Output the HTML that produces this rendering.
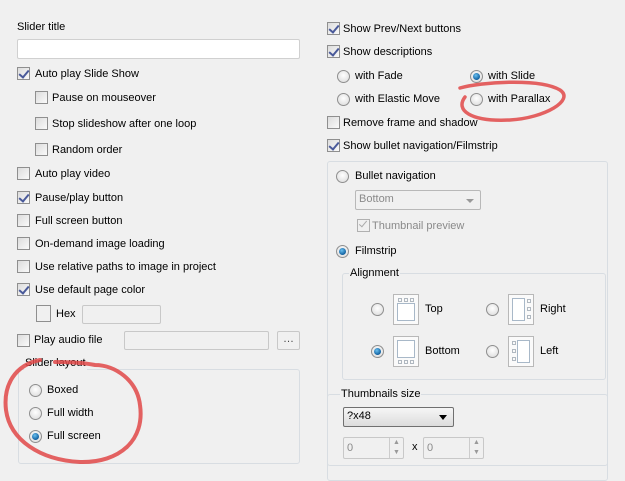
<!DOCTYPE html>
<html><head><meta charset="utf-8"><style>
*{box-sizing:border-box}
body{margin:0;width:625px;height:470px;background:#f0f0f0;font-family:"Liberation Sans",sans-serif;font-size:11px;color:#000;position:relative;overflow:hidden}
.a{position:absolute;white-space:nowrap;line-height:14px}
.cb{position:absolute;width:13px;height:13px;border:1px solid #8f8f8f;background:linear-gradient(135deg,#dcdcdc,#fafafa)}
.cb.on::after{content:"";position:absolute;left:3px;top:0px;width:4px;height:8px;border:solid #4a5a9a;border-width:0 2px 2px 0;transform:rotate(40deg)}
.rd{position:absolute;width:13px;height:13px;border-radius:50%;border:1px solid #8f8f8f;background:radial-gradient(circle at 50% 40%,#fff,#d8d8d8)}
.rd.on::after{content:"";position:absolute;left:2px;top:2px;width:7px;height:7px;border-radius:50%;background:radial-gradient(circle at 40% 35%,#6ac0f0,#1060a0 70%,#0a3050)}
.in{position:absolute;background:#fff;border:1px solid #c8c8c8;border-radius:2px}
.g{position:absolute;border:1px solid #d8dde2;border-radius:3px}
.lg{position:absolute;background:#f0f0f0;padding:0 1px;line-height:14px}
.dis{color:#8a8a8a}
</style></head><body>
<div class="a" style="left:17px;top:20px">Slider title</div>
<div class="in" style="left:17px;top:39px;width:283px;height:20px;border-color:#d0d0d0"></div>
<div class="cb on" style="left:17px;top:67px"></div><div class="a" style="left:35px;top:67px">Auto play Slide Show</div>
<div class="cb" style="left:35px;top:91px"></div><div class="a" style="left:52px;top:91px">Pause on mouseover</div>
<div class="cb" style="left:35px;top:117px"></div><div class="a" style="left:52px;top:117px">Stop slideshow after one loop</div>
<div class="cb" style="left:35px;top:143px"></div><div class="a" style="left:52px;top:143px">Random order</div>
<div class="cb" style="left:17px;top:167px"></div><div class="a" style="left:35px;top:167px">Auto play video</div>
<div class="cb on" style="left:17px;top:191px"></div><div class="a" style="left:35px;top:191px">Pause/play button</div>
<div class="cb" style="left:17px;top:214px"></div><div class="a" style="left:35px;top:214px">Full screen button</div>
<div class="cb" style="left:17px;top:237px"></div><div class="a" style="left:35px;top:237px">On-demand image loading</div>
<div class="cb" style="left:17px;top:260px"></div><div class="a" style="left:35px;top:260px">Use relative paths to image in project</div>
<div class="cb on" style="left:17px;top:283px"></div><div class="a" style="left:35px;top:283px">Use default page color</div>
<div style="position:absolute;left:36px;top:305px;width:15px;height:17px;border:1px solid #8f8f8f;background:#f0f0f0"></div>
<div class="a" style="left:56px;top:307px">Hex</div>
<div class="in" style="left:82px;top:305px;width:79px;height:19px;background:#f0f0f0"></div>
<div class="cb" style="left:17px;top:334px"></div><div class="a" style="left:34px;top:333px">Play audio file</div>
<div class="in" style="left:124px;top:331px;width:145px;height:19px;background:#f0f0f0"></div>
<div class="in" style="left:277px;top:331px;width:23px;height:19px;background:#f0f0f0;text-align:center;line-height:14px;color:#444">…</div>
<div class="g" style="left:18px;top:369px;width:282px;height:95px"></div>
<div class="lg" style="left:24px;top:356px">Slider layout</div>
<div class="rd" style="left:29px;top:384px"></div><div class="a" style="left:47px;top:383px">Boxed</div>
<div class="rd" style="left:29px;top:407px"></div><div class="a" style="left:47px;top:406px">Full width</div>
<div class="rd on" style="left:29px;top:430px"></div><div class="a" style="left:47px;top:429px">Full screen</div>

<div class="cb on" style="left:327px;top:22px"></div><div class="a" style="left:343px;top:22px">Show Prev/Next buttons</div>
<div class="cb on" style="left:327px;top:45px"></div><div class="a" style="left:343px;top:45px">Show descriptions</div>
<div class="rd" style="left:337px;top:70px"></div><div class="a" style="left:355px;top:69px">with Fade</div>
<div class="rd on" style="left:470px;top:70px"></div><div class="a" style="left:488px;top:69px">with Slide</div>
<div class="rd" style="left:337px;top:93px"></div><div class="a" style="left:355px;top:92px">with Elastic Move</div>
<div class="rd" style="left:470px;top:93px"></div><div class="a" style="left:488px;top:92px">with Parallax</div>
<div class="cb" style="left:327px;top:116px"></div><div class="a" style="left:343px;top:116px">Remove frame and shadow</div>
<div class="cb on" style="left:327px;top:139px"></div><div class="a" style="left:343px;top:139px">Show bullet navigation/Filmstrip</div>

<div class="g" style="left:327px;top:161px;width:281px;height:320px"></div>
<div class="rd" style="left:336px;top:170px"></div><div class="a" style="left:355px;top:169px">Bullet navigation</div>
<div class="in" style="left:355px;top:190px;width:126px;height:20px;background:#f0f0f0;border-color:#b8b8b8"><span class="dis" style="position:absolute;left:3px;top:2px">Bottom</span><span style="position:absolute;right:6px;top:8px;border:4px solid transparent;border-top:4px solid #999"></span></div>
<div class="cb" style="left:357px;top:219px;border-color:#b0b0b0;background:#f0f0f0"></div><div style="position:absolute;left:361px;top:219px;width:4px;height:8px;border:solid #aaa;border-width:0 1px 1px 0;transform:rotate(40deg)"></div>
<div class="a dis" style="left:372px;top:219px">Thumbnail preview</div>
<div class="rd on" style="left:336px;top:245px"></div><div class="a" style="left:355px;top:244px">Filmstrip</div>
<div class="g" style="left:342px;top:273px;width:264px;height:107px"></div>
<div class="lg" style="left:349px;top:266px">Alignment</div>
<div class="rd" style="left:371px;top:303px"></div><div class="a" style="left:425px;top:302px">Top</div>
<div class="rd" style="left:486px;top:303px"></div><div class="a" style="left:540px;top:302px">Right</div>
<div class="rd on" style="left:371px;top:345px"></div><div class="a" style="left:425px;top:344px">Bottom</div>
<div class="rd" style="left:486px;top:345px"></div><div class="a" style="left:540px;top:344px">Left</div>
<svg style="position:absolute;left:0;top:0" width="625" height="470">
<g fill="#fafafa" stroke="#b8b8b8">
<rect x="393.5" y="294.5" width="25" height="30"/><rect x="508.5" y="294.5" width="25" height="30"/>
<rect x="393.5" y="336.5" width="25" height="30"/><rect x="508.5" y="336.5" width="25" height="30"/></g>
<g fill="#fff" stroke="#a8b8c8">
<rect x="397.5" y="303.5" width="17" height="17"/><rect x="512.5" y="298.5" width="12" height="22"/>
<rect x="397.5" y="340.5" width="17" height="17"/><rect x="517.5" y="340.5" width="12" height="22"/>
</g>
<g fill="none" stroke="#b0b8c0">
<rect x="398.5" y="298.5" width="3" height="3"/><rect x="404.5" y="298.5" width="3" height="3"/><rect x="410.5" y="298.5" width="3" height="3"/>
<rect x="398.5" y="360.5" width="3" height="3"/><rect x="404.5" y="360.5" width="3" height="3"/><rect x="410.5" y="360.5" width="3" height="3"/>
<rect x="527.5" y="299.5" width="3" height="3"/><rect x="527.5" y="307.5" width="3" height="3"/><rect x="527.5" y="315.5" width="3" height="3"/>
<rect x="512.5" y="341.5" width="3" height="3"/><rect x="512.5" y="349.5" width="3" height="3"/><rect x="512.5" y="357.5" width="3" height="3"/>
</g>
<path d="M460 88 C480 82 540 78 560 90 C575 100 545 118 510 120 C470 122 455 110 465 97" fill="none" stroke="#e04848" stroke-width="3.5" stroke-linecap="round" opacity="0.85"/>
<path d="M40 360 C15 365 3 385 6 410 C10 440 40 460 80 462 C120 463 145 440 140 405 C137 380 115 365 95 365 C80 362 60 362 55 362" fill="none" stroke="#e04848" stroke-width="4" stroke-linecap="round" opacity="0.85"/>
</svg>
<div class="g" style="left:327px;top:394px;width:281px;height:72px;background:#f0f0f0"></div>
<div class="lg" style="left:340px;top:387px">Thumbnails size</div>
<div style="position:absolute;left:343px;top:407px;width:111px;height:20px;border:1px solid #707070;border-radius:2px;background:linear-gradient(#f6f6f6,#dcdcdc)"><span style="position:absolute;left:3px;top:2px">?x48</span><span style="position:absolute;right:6px;top:7px;border:4px solid transparent;border-top:5px solid #000"></span></div>
<div class="in" style="left:343px;top:437px;width:61px;height:22px;background:#f0f0f0"><span class="dis" style="position:absolute;left:3px;top:4px">0</span><span style="position:absolute;right:0;top:0;width:14px;height:20px;border-left:1px solid #ccc;color:#999;font-size:7px;line-height:10px;text-align:center">▲<br>▼</span></div>
<div class="a" style="left:412px;top:440px">x</div>
<div class="in" style="left:423px;top:437px;width:61px;height:22px;background:#f0f0f0"><span class="dis" style="position:absolute;left:3px;top:4px">0</span><span style="position:absolute;right:0;top:0;width:14px;height:20px;border-left:1px solid #ccc;color:#999;font-size:7px;line-height:10px;text-align:center">▲<br>▼</span></div>
</body></html>
